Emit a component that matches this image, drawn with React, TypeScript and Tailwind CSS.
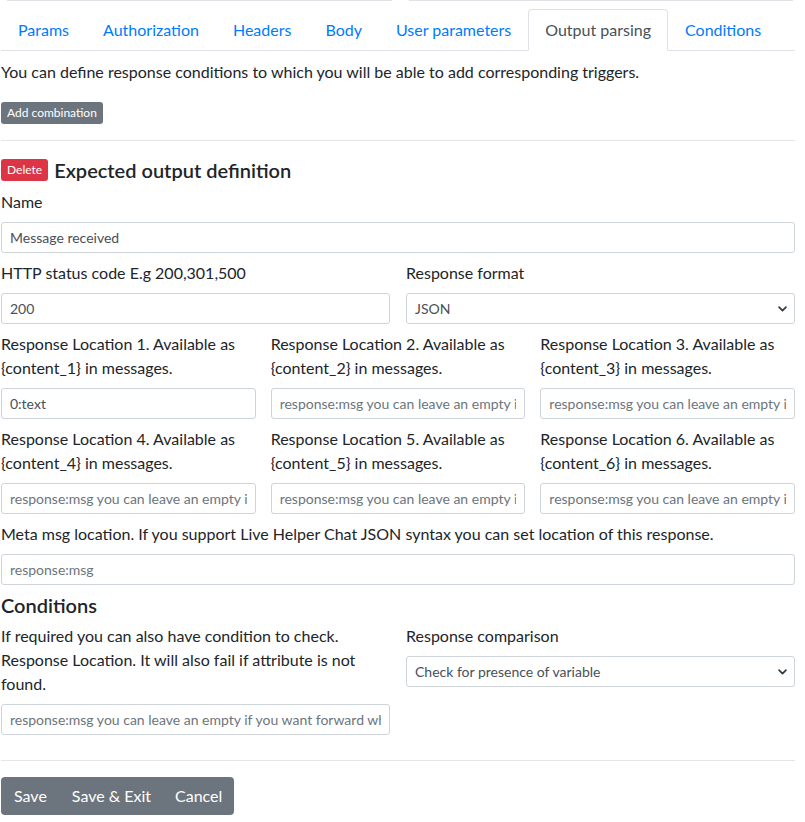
import { useState } from "react";

const tabs = [
  "Params",
  "Authorization",
  "Headers",
  "Body",
  "User parameters",
  "Output parsing",
  "Conditions",
];

const inputClass =
  "block w-full h-[31px] px-2 text-[14px] text-[#495057] placeholder:text-[#6c757d] bg-white border border-[#ced4da] rounded-[3px] outline-none";

const Chevron = () => (
  <svg
    className="pointer-events-none absolute right-[7px] top-[10px] h-[11px] w-[11px] text-[#343a40]"
    viewBox="0 0 16 16"
    fill="none"
    stroke="currentColor"
    strokeWidth="2.5"
    strokeLinecap="round"
    strokeLinejoin="round"
  >
    <path d="M3 6l5 5 5-5" />
  </svg>
);

const Select = ({ value }: { value: string }) => (
  <div className="relative">
    <select
      className={inputClass + " appearance-none pr-6"}
      defaultValue={value}
    >
      <option>{value}</option>
    </select>
    <Chevron />
  </div>
);

const Field = ({
  label,
  placeholder,
  value,
}: {
  label: React.ReactNode;
  placeholder?: string;
  value?: string;
}) => (
  <div className="mb-2">
    <label className="block mb-2">{label}</label>
    <input
      className={inputClass}
      placeholder={placeholder}
      defaultValue={value}
    />
  </div>
);

const locationPlaceholder =
  "response:msg you can leave an empty if you want forward whole response";

const App = (): JSX.Element => {
  const [active, setActive] = useState("Output parsing");

  return (
    <div
      className="w-[805px] min-h-[822px] bg-white text-[#212529] text-[16px] leading-6"
      style={{ fontFamily: "Lato, 'Liberation Sans', sans-serif" }}
    >
      <div className="flex gap-[17px] pl-[7px] pr-[12px]">
        <div className="flex-1 border-t border-[#dee2e6]" />
        <div className="flex-1 border-t border-[#dee2e6]" />
      </div>
      <div className="pl-[1px] w-[795px] pt-[8px]">
        <ul className="flex border-b border-[#dee2e6]">
          {tabs.map((tab) => (
            <li key={tab} className="-mb-[1px]">
              <button
                onClick={() => setActive(tab)}
                className={
                  tab === active
                    ? "block px-4 py-2 border border-[#dee2e6] border-b-white rounded-t-[4px] bg-white text-[#495057]"
                    : "block px-4 py-2 border border-transparent text-[#007bff]"
                }
              >
                {tab}
              </button>
            </li>
          ))}
        </ul>

        <p className="mt-[9px] mb-[18px]">
          You can define response conditions to which you will be able to add
          corresponding triggers.
        </p>
        <div className="flex">
          <button className="bg-[#6c757d] text-white text-[12px] leading-[18px] px-[6px] py-[2px] rounded-[3px]">
            Add combination
          </button>
        </div>
        <hr className="mt-4 mb-[17px] border-[#e5e5e5]" />

        <div className="flex items-center gap-[6px] mb-2">
          <button className="bg-[#dc3545] text-white text-[12px] leading-[18px] px-[6px] py-[2px] rounded-[3px]">
            Delete
          </button>
          <h5 className="text-[20px] leading-6 font-semibold">
            Expected output definition
          </h5>
        </div>

        <Field label="Name" value="Message received" />

        <div className="grid grid-cols-2 gap-x-4">
          <Field label="HTTP status code E.g 200,301,500" value="200" />
          <div className="mb-2">
            <label className="block mb-2">Response format</label>
            <Select value="JSON" />
          </div>
        </div>

        <div className="grid grid-cols-3 gap-x-[15px]">
          {[1, 2, 3, 4, 5, 6].map((n) => (
            <Field
              key={n}
              label={`Response Location ${n}. Available as {content_${n}} in messages.`}
              value={n === 1 ? "0:text" : undefined}
              placeholder={locationPlaceholder}
            />
          ))}
        </div>

        <Field
          label="Meta msg location. If you support Live Helper Chat JSON syntax you can set location of this response."
          placeholder="response:msg"
        />

        <h5 className="text-[20px] leading-6 font-semibold mt-[2px] mb-[7px]">
          Conditions
        </h5>

        <div className="grid grid-cols-2 gap-x-4">
          <Field
            label="If required you can also have condition to check. Response Location. It will also fail if attribute is not found."
            placeholder={locationPlaceholder}
          />
          <div className="mb-2">
            <label className="block mb-2">Response comparison</label>
            <Select value="Check for presence of variable" />
          </div>
        </div>

        <hr className="mt-[17px] mb-4 border-[#e5e5e5]" />

        <div className="inline-flex rounded-[4px] overflow-hidden bg-[#6c757d] text-white">
          <button className="px-[13px] py-[7px]">Save</button>
          <button className="px-[12px] py-[7px]">Save &amp; Exit</button>
          <button className="px-[12px] py-[7px]">Cancel</button>
        </div>
      </div>
    </div>
  );
};

export default App;
